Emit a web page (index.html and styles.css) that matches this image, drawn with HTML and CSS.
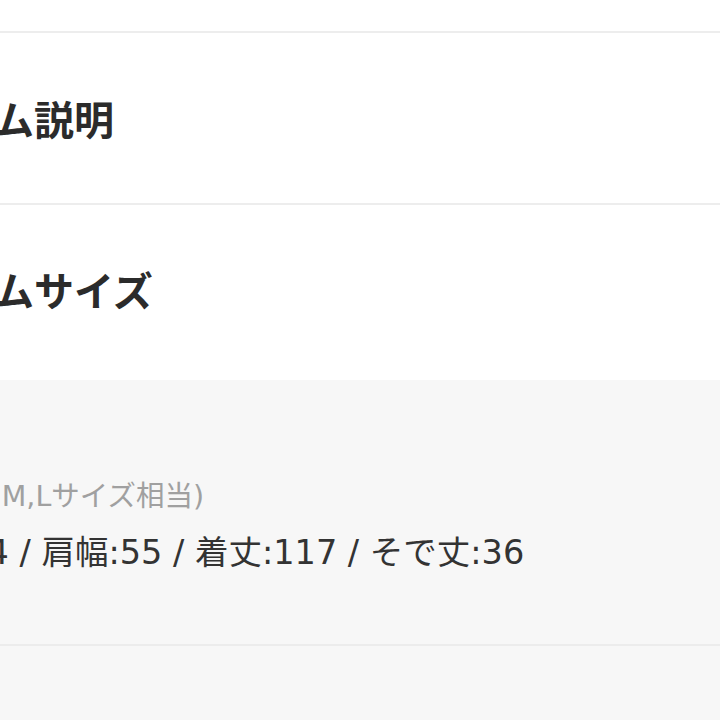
FILE: index.html
```html
<!DOCTYPE html>
<html lang="ja">
<head>
    <meta charset="UTF-8">
    <meta name="viewport" content="width=device-width, initial-scale=1.0">
    <title>アイテム情報</title>
    <link rel="stylesheet" href="styles.css">
</head>
<body>
    <div class="page">
        <div class="top"></div>

        <section class="block">
            <h2 class="block-title">アイテム説明</h2>
        </section>

        <section class="block block-size">
            <h2 class="block-title">アイテムサイズ</h2>
        </section>

        <div class="size-detail">
            <p class="size-note">(フリーサイズ M,Lサイズ相当)</p>
            <p class="size-values">身幅:64 / 肩幅:55 / 着丈:117 / そで丈:36</p>
        </div>

        <div class="rest"></div>
    </div>
</body>
</html>
```

FILE: styles.css
```css
html,
body {
    margin: 0;
    padding: 0;
    background-color: #f7f7f7;
}

body {
    font-family: 'DejaVu Sans', 'Noto Sans CJK JP', sans-serif;
    color: #333;
}

.page {
    width: 720px;
    height: 720px;
    overflow: hidden;
    display: flex;
    flex-direction: column;
}

.top {
    height: 31px;
    background-color: #fff;
    border-bottom: 2px solid #ededed;
}

.block {
    height: 170px;
    display: flex;
    align-items: center;
    background-color: #fff;
    border-bottom: 2px solid #ededed;
    white-space: nowrap;
}

.block-size {
    height: 175px;
    padding-bottom: 8px;
    box-sizing: border-box;
    border-bottom: none;
}

.block-title {
    margin: 0 0 0 -122px;
    font-family: 'Noto Sans CJK JP', sans-serif;
    font-size: 40px;
    font-weight: bold;
    color: #2b2b2b;
}

.size-detail {
    height: 266px;
    padding-top: 99px;
    box-sizing: border-box;
    background-color: #f7f7f7;
    border-bottom: 2px solid #ececec;
    white-space: nowrap;
}

.size-note {
    margin: 0 0 16px -188px;
    font-size: 28.5px;
    line-height: 36px;
    color: #a0a0a0;
}

.size-values {
    margin: 0 0 0 -112px;
    font-size: 33.5px;
    line-height: 44px;
    color: #333;
}

.rest {
    flex: 1;
    background-color: #f7f7f7;
}
```
